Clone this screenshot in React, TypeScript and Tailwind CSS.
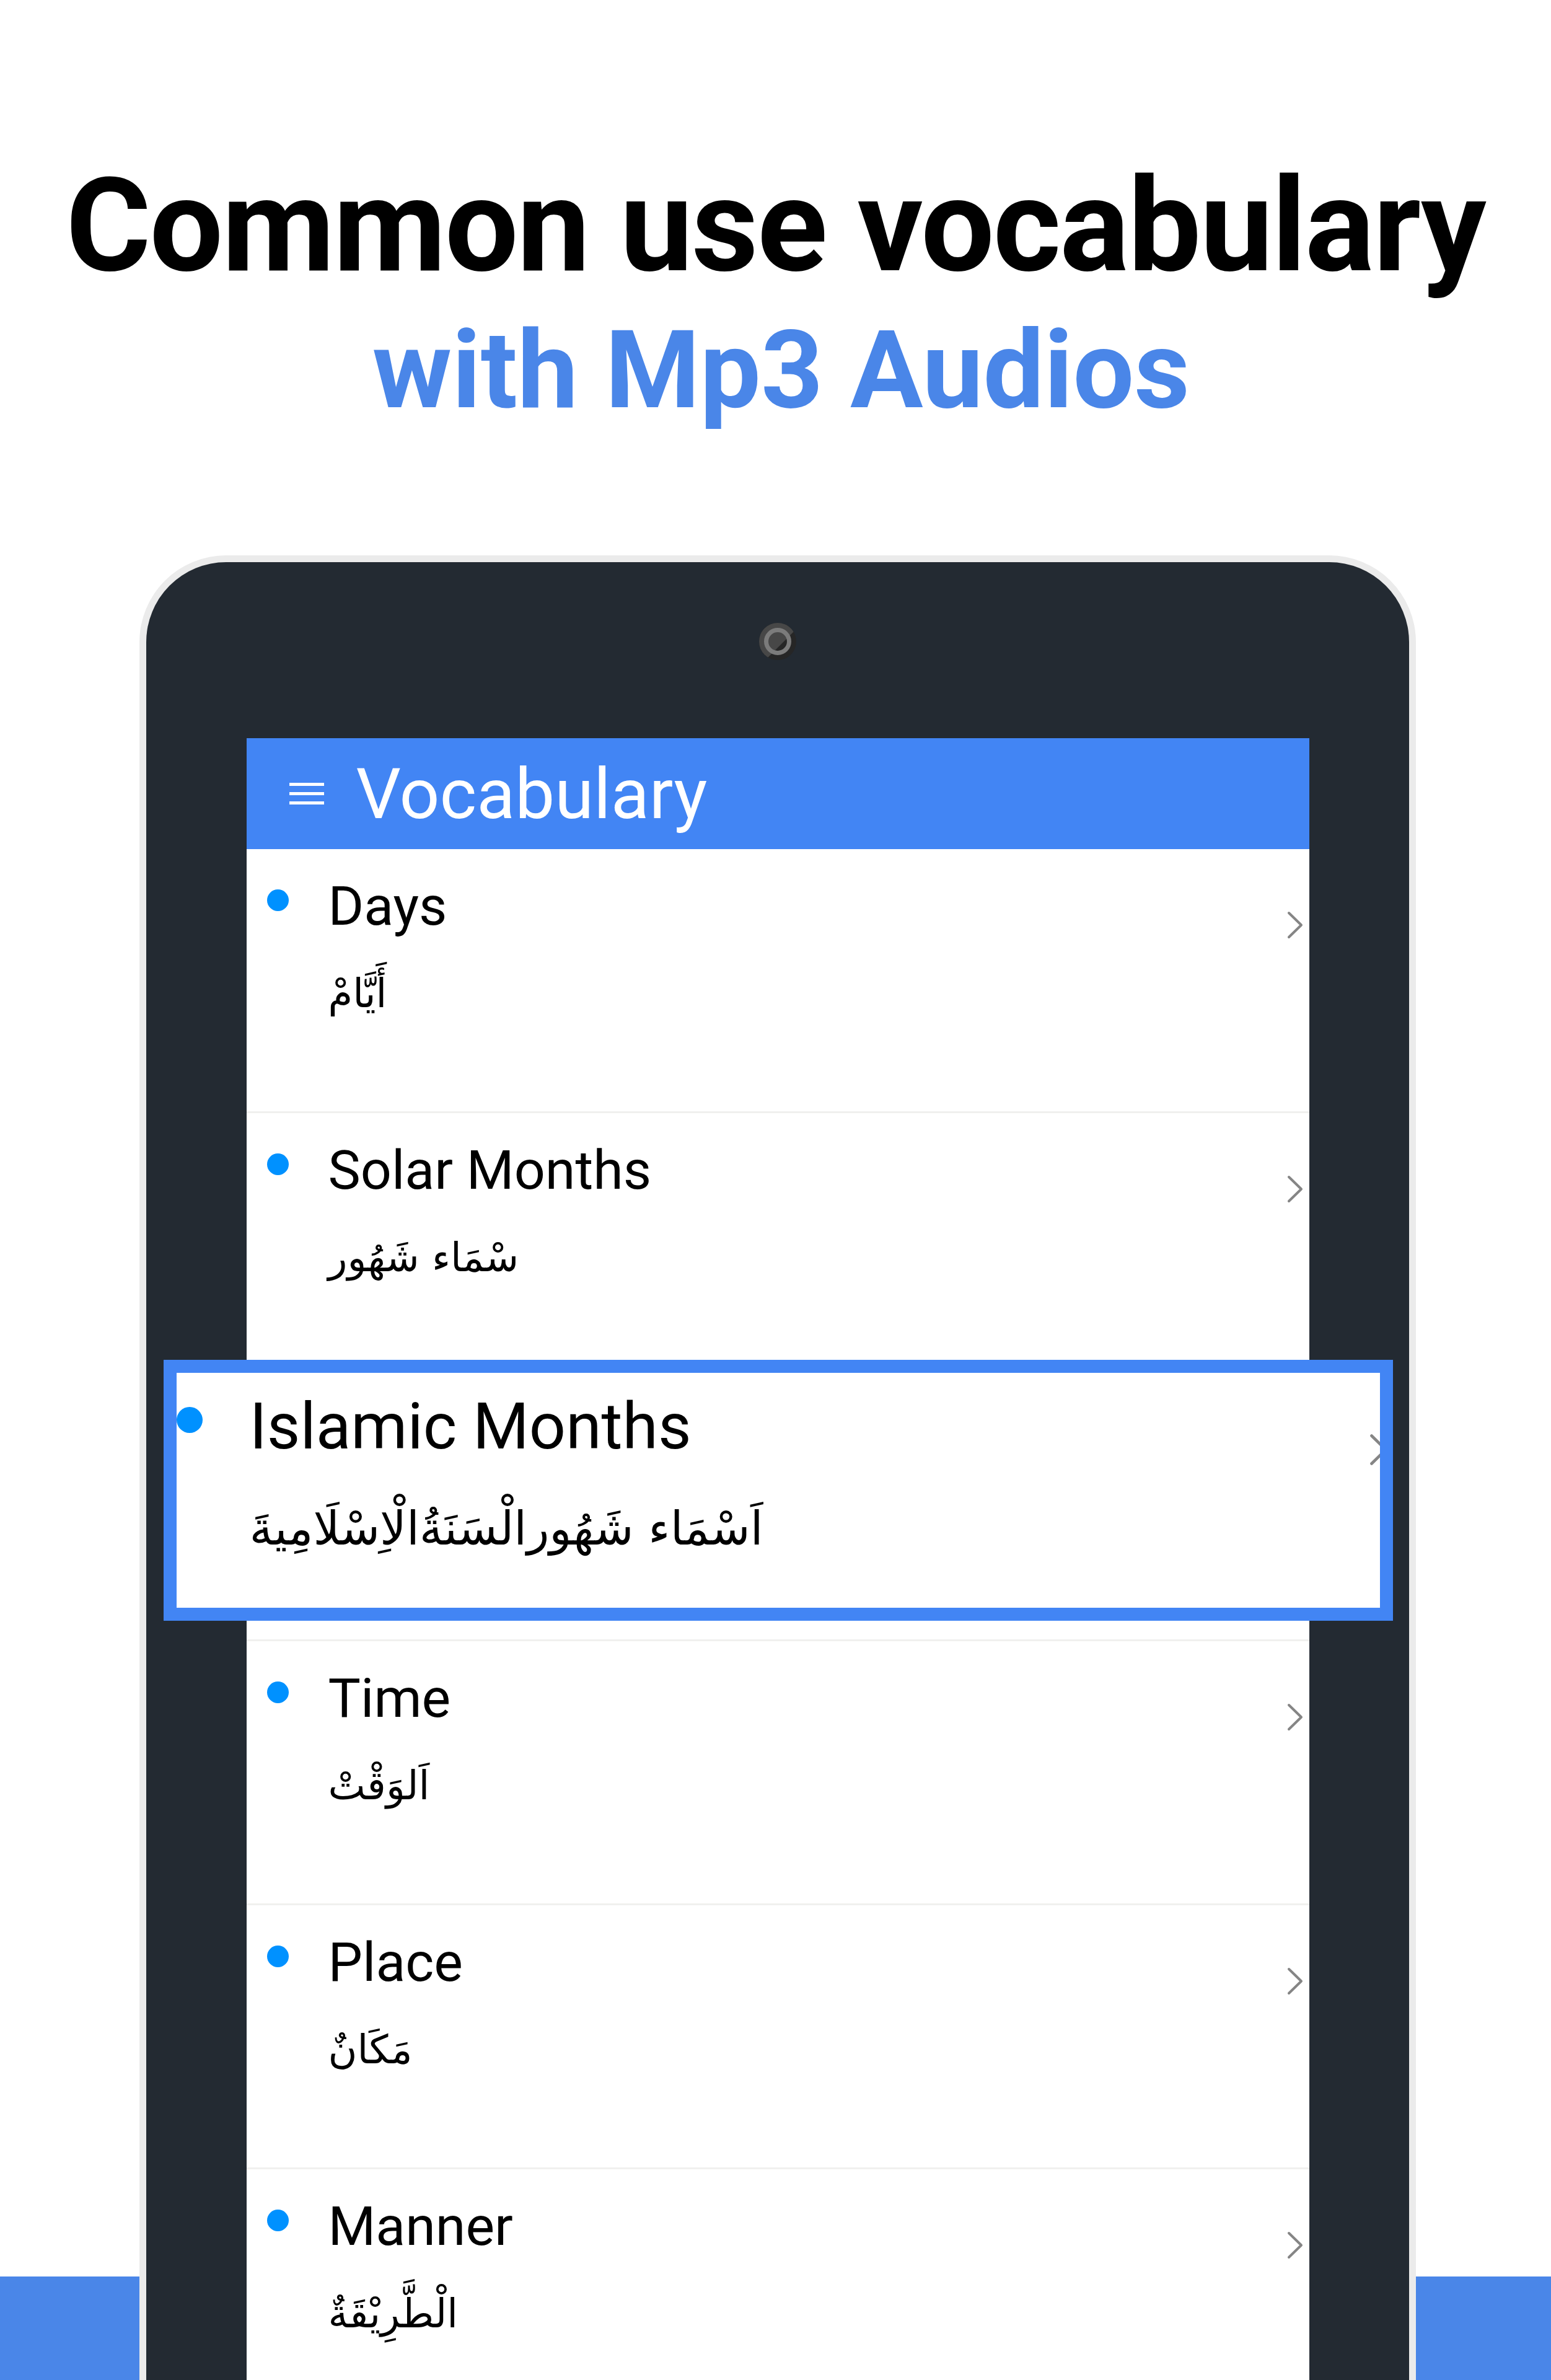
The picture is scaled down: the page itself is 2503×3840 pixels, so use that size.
import React from "react";

type Row = { en: string; ar: string };

const rowsTop: Row[] = [
  { en: "Days", ar: "أَيَّامْ" },
  { en: "Solar Months", ar: "سْمَاء شَهُور" },
];
const rowsBottom: Row[] = [
  { en: "Time", ar: "اَلوَقْتْ" },
  { en: "Place", ar: "مَكَانٌ" },
  { en: "Manner", ar: "الْطَّرِيْقَةٌ" },
];

function Chevron({ w, h, className }: { w: number; h: number; className?: string }) {
  return (
    <svg width={w} height={h} viewBox="0 0 26 45" className={className} fill="none">
      <path d="M3 3 L23 22.5 L3 42" stroke="#858585" strokeWidth="4" strokeLinecap="round" strokeLinejoin="round" />
    </svg>
  );
}

function ListRow({ row }: { row: Row }) {
  return (
    <div className="flex h-[426px] items-start border-b-[3px] border-[#f0f0ee]">
      <div className="ml-[33px] mt-[65px] h-[35px] w-[35px] shrink-0 rounded-full bg-[#0091ff]" />
      <div className="ml-[64px] mt-[48px] flex flex-col items-start">
        <div className="text-[88px] leading-none text-black font-['Roboto',sans-serif]">{row.en}</div>
        <div dir="rtl" className="mt-[65px] text-[64px] leading-none text-black font-['DejaVu_Sans',sans-serif]">
          {row.ar}
        </div>
      </div>
      <Chevron w={26} h={45} className="ml-auto mr-[10px] mt-[100px] shrink-0" />
    </div>
  );
}

function Camera() {
  return (
    <svg width="60" height="60" viewBox="0 0 60 60">
      <defs>
        <clipPath id="half">
          <polygon points="0,0 60,0 60,10 10,60 0,60" />
        </clipPath>
      </defs>
      <circle cx="30" cy="30" r="30" fill="#262626" />
      <circle cx="30" cy="30" r="30" fill="#474747" clipPath="url(#half)" />
      <circle cx="30" cy="30" r="18.5" fill="none" stroke="#7b7b7b" strokeWidth="7" />
    </svg>
  );
}

export default function App() {
  return (
    <div className="relative h-[3840px] w-[2503px] overflow-hidden bg-white font-['Roboto',sans-serif]">
      <div className="absolute bottom-0 left-0 right-0 h-[167px] bg-[#4a86e8]" />

      <div className="pt-[259px] text-center">
        <h1 className="text-[210px] font-bold leading-none tracking-[-2px] text-black">Common use vocabulary</h1>
        <p className="mt-[41px] pl-[18px] text-[175px] font-bold leading-none text-[#4a86e8]">with Mp3 Audios</p>
      </div>

      <div className="relative z-10 ml-[225px] mt-[211px] flex h-[3200px] w-[2060px] flex-col items-center rounded-t-[140px] border-[11px] border-b-0 border-[#ebebeb] bg-[#232a32]">
        <div className="mt-[98px]">
          <Camera />
        </div>

        <div className="mt-[126px] w-[1715px] bg-white">
          <div className="flex h-[179px] items-center bg-[#4285f4]">
            <div className="ml-[69px] flex w-[56px] flex-col gap-[10px]">
              <div className="h-[5px] bg-white" />
              <div className="h-[5px] bg-white" />
              <div className="h-[5px] bg-white" />
            </div>
            <div className="ml-[52px] text-[114px] leading-none text-white">Vocabulary</div>
          </div>

          {rowsTop.map((r) => (
            <ListRow key={r.en} row={r} />
          ))}

          <div className="relative h-[426px] border-b-[3px] border-[#f0f0ee]">
            <div className="absolute left-[-134px] top-[-28px] z-20 h-[421px] w-[1984px] overflow-hidden border-[21px] border-[#4285f4] bg-white">
              <div className="flex items-start">
                <div className="mt-[55px] h-[42px] w-[42px] shrink-0 rounded-full bg-[#0091ff]" />
                <div className="ml-[76px] mt-[35px] flex flex-col items-start">
                  <div className="text-[104px] leading-none text-black">Islamic Months</div>
                  <div dir="rtl" className="mt-[75px] text-[75px] leading-none text-black font-['DejaVu_Sans',sans-serif]">
                    اَسْمَاء شَهُورالْسَنَةُالْاِسْلَامِيةَ
                  </div>
                </div>
                <Chevron w={30} h={52} className="ml-auto mr-[-13px] mt-[98px] shrink-0" />
              </div>
            </div>
          </div>

          {rowsBottom.map((r) => (
            <ListRow key={r.en} row={r} />
          ))}
        </div>
      </div>
    </div>
  );
}
